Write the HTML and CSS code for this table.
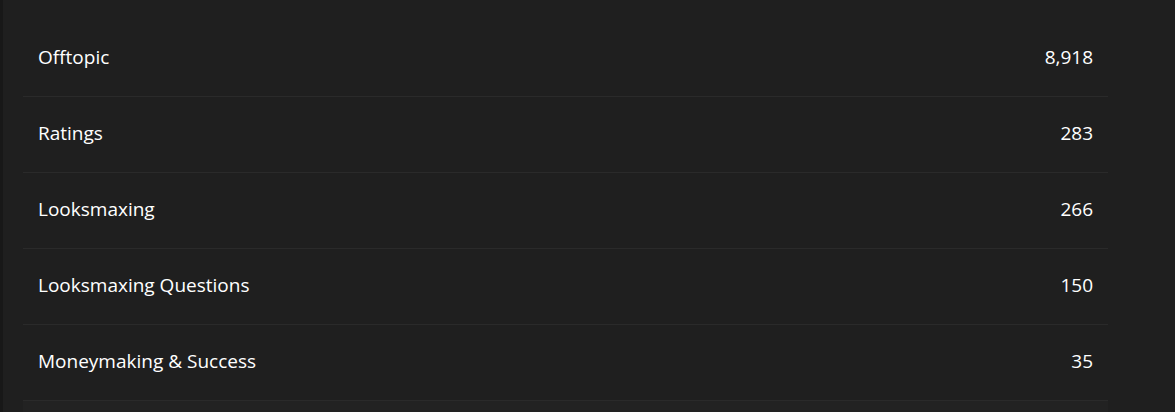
FILE: index.html
```html
<!DOCTYPE html>
<html>
<head>
<meta charset="utf-8">
<link rel="stylesheet" href="styles.css">
</head>
<body>
<div class="page">
  <div class="edge"></div>
  <div class="content">
    <ul class="list">
      <li class="row"><span class="name">Offtopic</span><span class="count">8,918</span></li>
      <li class="row"><span class="name">Ratings</span><span class="count">283</span></li>
      <li class="row"><span class="name">Looksmaxing</span><span class="count">266</span></li>
      <li class="row"><span class="name">Looksmaxing Questions</span><span class="count">150</span></li>
      <li class="row"><span class="name">Moneymaking &amp; Success</span><span class="count">35</span></li>
    </ul>
    <div class="more"></div>
  </div>
</div>
</body>
</html>
```
FILE: styles.css
```css
html, body {
  margin: 0;
  padding: 0;
  background: #1f1f1f;
  height: 100%;
  overflow: hidden;
}
.page {
  display: flex;
  height: 412px;
  font-family: "Open Sans", "Noto Sans", sans-serif;
  color: #ffffff;
}
.edge {
  width: 3px;
  background: #181818;
  flex: none;
}
.content {
  width: 1085px;
  margin-left: 20px;
  padding-top: 21px;
}
.list {
  list-style: none;
  margin: 0;
  padding: 0;
}
.row {
  display: flex;
  justify-content: space-between;
  align-items: center;
  height: 71px;
  box-sizing: content-box;
  border-bottom: 1px solid #2a2a2a;
  padding: 0 15px 4px;
  font-size: 19px;
  line-height: 24px;
}
.more {
  height: 20px;
  background: #222222;
}
```
